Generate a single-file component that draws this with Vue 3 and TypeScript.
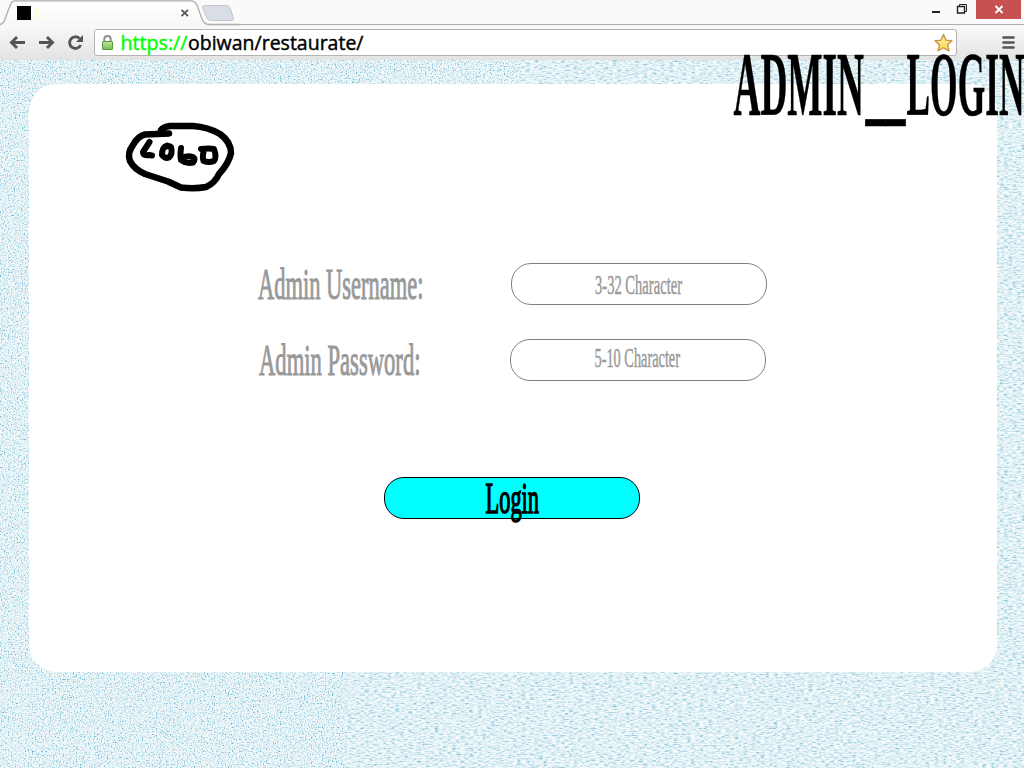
<script setup lang="ts">
interface Field {
  id: string
  label: string
  labelX: number
  labelWidth: number
  hint: string
  hintX: number
  hintY: number
  hintWidth: number
}

const fields: Field[] = [
  { id: 'username', label: 'Admin Username:', labelX: 0, labelWidth: 165.5, hint: '3-32 Character', hintX: 83, hintY: 29.5, hintWidth: 87 },
  { id: 'password', label: 'Admin Password:', labelX: 1, labelWidth: 161.5, hint: '5-10 Character', hintX: 83.5, hintY: 27, hintWidth: 85.5 },
]
</script>

<template>
  <div class="window">
    <header class="chrome">
      <svg class="tabs" width="240" height="26" viewBox="0 0 240 26">
        <defs>
          <linearGradient id="tabFill" x1="0" y1="0" x2="0" y2="1">
            <stop offset="0" stop-color="#ffffff" />
            <stop offset="1" stop-color="#f7f7f7" />
          </linearGradient>
        </defs>
        <path d="M0 24.500C3 24 4 22 5 19L10.500 4.500Q12 .8 15 .8H191Q195 .8 197 5L202 19Q204 24 208 24.500H240V26H0Z" fill="url(#tabFill)" />
        <rect x="206" y="0" width="34" height="24" fill="#fafafa" />
        <path d="M0 24.500C3 24 4 22 5 19L10.500 4.500Q12 .8 15 .8H191Q195 .8 197 5L202 19Q204 24 208 24.500H240" fill="none" stroke="#adadad" stroke-width="1.300" />
        <path d="M205 5.500H226Q229 5.500 230 8L233.500 18Q234 20.500 231 20.500H211Q208 20.500 207 18L202.500 8Q202 5.500 205 5.500Z" fill="#d8dde6" stroke="#c3c6cb" />
        <rect x="17" y="6" width="14" height="14" />
        <rect x="36" y="8" width="1" height="10" fill="#ffffb8" />
        <path d="M181.500 9.800L188 16.200M188 9.800L181.500 16.200" stroke="#555" stroke-width="1.800" />
      </svg>
      <div class="rule"></div>
      <svg class="controls" width="98" height="26" viewBox="0 0 98 26">
        <path d="M6 12H14" stroke="#222" stroke-width="2" />
        <path d="M33.500 6V4.500H40.500V11.500H39" fill="none" stroke="#222" />
        <path d="M31.500 6.500H38.500V13H31.500Z" fill="none" stroke="#222" stroke-width="1.400" />
        <rect x="50" y="0" width="45" height="19" fill="#c75050" />
        <path d="M69.500 6L76.500 13M76.500 6L69.500 13" stroke="#fff" stroke-width="1.900" />
      </svg>
    </header>

    <nav class="toolbar">
      <svg class="nav-icons" width="94" height="34" viewBox="0 26 94 34" fill="none" stroke="#555">
        <path d="M25 42.500H12M17 37L11.500 42.500L17 48" stroke-width="2.900" />
        <path d="M39 42.500H52M47 37L52.500 42.500L47 48" stroke-width="2.900" />
        <path d="M79.500 38.500A5.800 5.800 0 1 0 80.700 45" stroke-width="2.900" />
        <path d="M83 35V42H76Z" fill="#555" stroke="none" />
      </svg>
      <div class="address">
        <svg width="861" height="25" viewBox="95 30 861 25">
          <defs>
            <linearGradient id="lockFill" x1="0" y1="0" x2="0" y2="1">
              <stop offset="0" stop-color="#c0e894" />
              <stop offset="1" stop-color="#79bd5a" />
            </linearGradient>
            <linearGradient id="starFill" x1="0" y1="0" x2="0" y2="1">
              <stop offset="0" stop-color="#fff4a6" />
              <stop offset="1" stop-color="#fbd354" />
            </linearGradient>
          </defs>
          <path d="M104.300 42V39Q104.300 36 107.500 36Q110.700 36 110.700 39V42" fill="none" stroke="#909090" stroke-width="2" />
          <rect x="102.500" y="41.500" width="10" height="8" rx=".6" fill="url(#lockFill)" stroke="#579642" />
          <text class="url secure" x="120.500" y="49.500" textLength="67" lengthAdjust="spacingAndGlyphs">https://</text>
          <text class="url" x="188" y="49.500" textLength="175.500" lengthAdjust="spacingAndGlyphs">obiwan/restaurate/</text>
          <path d="M943.500 34.500L946 40.200L952 40.800L947.500 44.800L949 51L943.500 47.800L938 51L939.500 44.800L935 40.800L941 40.200Z" fill="url(#starFill)" stroke="#c8913c" stroke-width="1.300" stroke-linejoin="round" />
        </svg>
      </div>
      <svg class="menu" width="22" height="34" viewBox="1002 26 22 34">
        <path d="M1003.500 37.500H1013.500M1003.500 42.500H1013.500M1003.500 47.500H1013.500" stroke="#555" stroke-width="2.600" stroke-linecap="round" />
      </svg>
    </nav>

    <main class="page">
      <svg class="texture" width="1024" height="708" viewBox="0 0 1024 708">
        <defs>
          <filter id="fine" x="0" y="0" width="1" height="1" color-interpolation-filters="sRGB">
            <feTurbulence type="fractalNoise" baseFrequency="0.71 0.67" numOctaves="3" seed="4" />
            <feColorMatrix values="1 0 0 0 0  1 0 0 0 0  1 0 0 0 0  0 0 0 0 1" />
            <feComponentTransfer>
              <feFuncR type="table" tableValues="0.35 0.35 0.45 0.65 0.81 0.895 0.95 0.98 1 1 1" />
              <feFuncG type="table" tableValues="0.68 0.68 0.73 0.83 0.91 0.95 0.975 0.99 1 1 1" />
              <feFuncB type="table" tableValues="0.8 0.8 0.83 0.89 0.94 0.965 0.98 0.99 1 1 1" />
            </feComponentTransfer>
          </filter>
          <filter id="wide" x="0" y="0" width="1" height="1" color-interpolation-filters="sRGB">
            <feTurbulence type="fractalNoise" baseFrequency="0.23 0.69" numOctaves="3" seed="9" />
            <feColorMatrix values="1 0 0 0 0  1 0 0 0 0  1 0 0 0 0  0 0 0 0 1" />
            <feComponentTransfer>
              <feFuncR type="table" tableValues="0.5 0.5 0.58 0.71 0.82 0.885 0.935 0.97 1 1 1" />
              <feFuncG type="table" tableValues="0.76 0.76 0.79 0.86 0.915 0.947 0.97 0.99 1 1 1" />
              <feFuncB type="table" tableValues="0.85 0.85 0.87 0.91 0.94 0.962 0.98 0.99 1 1 1" />
            </feComponentTransfer>
          </filter>
        </defs>
        <rect width="345" height="708" filter="url(#fine)" />
        <rect x="345" width="679" height="708" filter="url(#wide)" />
        <rect width="520" height="30" filter="url(#fine)" />
      </svg>

      <section class="card">
        <svg class="logo" width="116" height="76" viewBox="122 119 116 76" fill="none" stroke="#000" stroke-linecap="round" stroke-linejoin="round">
          <path d="M169 133.500L145 134.500Q138 136 133 145Q127 153 130 161Q134 169 145 174L168 181.500L181 187.500Q195 189 206 187Q215 183 219 174Q229 163 231 153Q231 142 220 134Q208 127 193 126L170 126Q163 127 161 130" stroke-width="6.500" />
          <path d="M149.500 142L143 152Q143 156 149 155L152 155.500M167 145.500Q162 147 162 155Q165 159 169 157.500Q173 154 171 147Q169 145 165 147M181 148Q180 156 181 160Q186 164 193 162.500Q196 159 193 157Q187 155 183 158M204 150Q202 157 203.500 161Q209 163 214 161Q217 157 214 149Q209 148 201 149" stroke-width="6" />
        </svg>

        <form class="fields" @submit.prevent>
          <div v-for="field in fields" :key="field.id" class="row" :class="field.id">
            <svg class="label" width="180" height="44" viewBox="0 0 180 44">
              <text :x="field.labelX" y="36" :textLength="field.labelWidth" lengthAdjust="spacingAndGlyphs">{{ field.label }}</text>
            </svg>
            <div class="entry">
              <svg width="254" height="40" viewBox="0 0 254 40">
                <text class="hint" :x="field.hintX" :y="field.hintY" :textLength="field.hintWidth" lengthAdjust="spacingAndGlyphs">{{ field.hint }}</text>
              </svg>
            </div>
          </div>
          <button class="login" type="submit">
            <svg width="254" height="40" viewBox="0 0 254 40">
              <text x="100.500" y="35" textLength="53.500" lengthAdjust="spacingAndGlyphs">Login</text>
            </svg>
          </button>
        </form>
      </section>
    </main>

    <svg class="heading" width="294" height="82" viewBox="730 48 294 82">
      <text x="733.500" y="115" textLength="130.500" lengthAdjust="spacingAndGlyphs">ADMIN</text>
      <text x="865.500" y="112.500" textLength="40" lengthAdjust="spacingAndGlyphs">__</text>
      <text x="906.500" y="115" textLength="118" lengthAdjust="spacingAndGlyphs">LOGIN</text>
    </svg>
  </div>
</template>

<style>
body {
  margin: 0;
  overflow: hidden;
}
</style>

<style scoped>
.window {
  position: relative;
  width: 1024px;
  height: 768px;
  overflow: hidden;
  background: #fff;
}
svg {
  display: block;
  flex: none;
  overflow: visible;
}
.chrome {
  display: flex;
  height: 26px;
  background: #fafafa;
}
.rule {
  flex: 1;
  height: 24px;
  border-bottom: 1px solid #adadad;
  box-shadow: 0 1px #f7f7f7;
}
.controls {
  background: linear-gradient(#adadad, #adadad) 0 24px / 100% 1px no-repeat;
}
.toolbar {
  display: flex;
  height: 34px;
  background: linear-gradient(#f8f8f8, #e3e3e3);
}
.address {
  box-sizing: border-box;
  width: 863px;
  height: 27px;
  margin-top: 3px;
  border: 1px solid #b4b4b4;
  border-radius: 3px;
  background: #fff;
}
.menu {
  margin-left: 45px;
}
.url {
  font: 20.5px "Open Sans", "Noto Sans", sans-serif;
  stroke: #000;
  stroke-width: 0.45px;
}
.secure {
  fill: #0f0;
  stroke: #0f0;
}
.page {
  position: relative;
  box-sizing: border-box;
  height: 708px;
  padding: 24px 27px 96px 29px;
}
.texture {
  position: absolute;
  inset: 0;
}
.card {
  position: relative;
  box-sizing: border-box;
  height: 588px;
  padding: 35px 0 0 93px;
  border-radius: 27px;
  background: #fff;
}
.fields {
  padding: 68px 0 0 136px;
}
.row {
  display: flex;
  gap: 73px;
  height: 44px;
  margin-bottom: 32px;
}
.row.password {
  gap: 72px;
}
.label text {
  font: 45px "Liberation Serif", serif;
  fill: #999;
  stroke: #999;
  stroke-width: 1.1px;
}
.entry {
  box-sizing: border-box;
  width: 256px;
  height: 42px;
  border: 1px solid #808080;
  border-radius: 20px;
}
.hint {
  font: 28px "Liberation Serif", serif;
  fill: #999;
  stroke: #999;
  stroke-width: 0.5px;
}
.login {
  box-sizing: border-box;
  display: block;
  width: 256px;
  height: 42px;
  margin: 94px 0 0 126px;
  padding: 0;
  border: 1px solid #000;
  border-radius: 20px;
  background: #0ff;
}
.login text {
  font: 45px "Liberation Serif", serif;
  stroke: #000;
  stroke-width: 1.6px;
}
.heading {
  position: absolute;
  top: 48px;
  right: 0;
}
.heading text {
  font: bold 91px "Liberation Serif", serif;
  stroke: #000;
  stroke-width: 0.6px;
}
</style>
